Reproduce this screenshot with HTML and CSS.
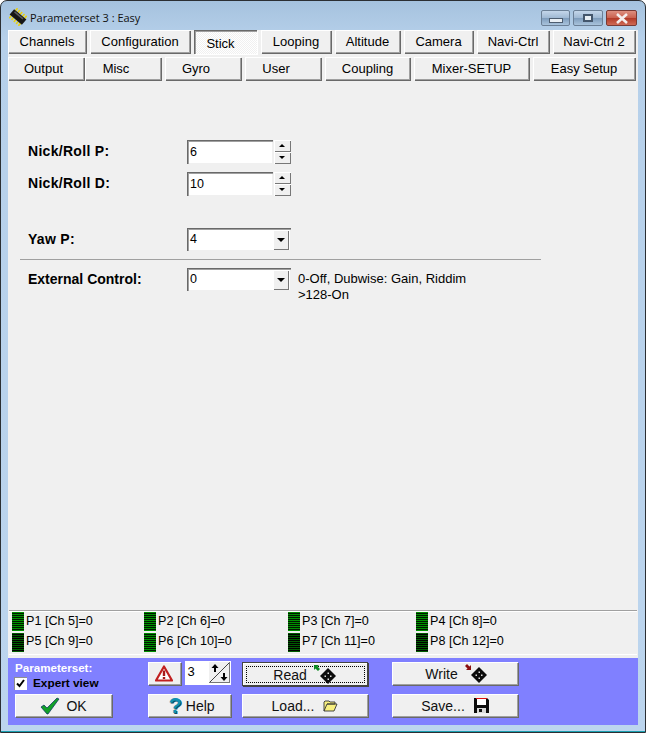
FILE: index.html
```html
<!DOCTYPE html>
<html lang="en">
<head>
  <meta charset="UTF-8">
  <title>Parameterset 3 : Easy</title>
  <link rel="stylesheet" href="styles.css">
</head>
<body>
  <div class="window">
    <div class="titlebar">
      <svg class="app-icon" width="18" height="18" viewBox="0 0 18 18">
        <g transform="rotate(40 9 9)">
          <path d="M3 2.500v13M6 2.500v13M9 2.500v13M12 2.500v13M15 2.500v13" stroke="#e8d010" stroke-width="1.600"/>
          <rect x="1" y="5.500" width="16" height="7" fill="#161616"/>
          <rect x="3" y="6.500" width="11" height="1.500" fill="#5a5a5a"/>
        </g>
      </svg>
      <span class="title">Parameterset 3 : Easy</span>
      <div class="caption-buttons">
        <div class="cap-btn cap-btn-min"><span class="cap-min"></span></div>
        <div class="cap-btn"><span class="cap-max"></span></div>
        <div class="cap-btn cap-close">
          <svg width="14" height="11" viewBox="0 0 14 11"><path d="M2 1l10 9M12 1L2 10" stroke="#f4eeee" stroke-width="2.600" fill="none"/></svg>
        </div>
      </div>
    </div>

    <div class="client">
      <div class="tabs tabs-top">
        <div class="tab">Channels</div>
        <div class="tab">Configuration</div>
        <div class="tab tab-active">Stick</div>
        <div class="tab">Looping</div>
        <div class="tab">Altitude</div>
        <div class="tab">Camera</div>
        <div class="tab">Navi-Ctrl</div>
        <div class="tab">Navi-Ctrl 2</div>
      </div>
      <div class="tabs tabs-bottom">
        <div class="tab tab-output">Output</div>
        <div class="tab tab-short">Misc</div>
        <div class="tab tab-short">Gyro</div>
        <div class="tab tab-short">User</div>
        <div class="tab">Coupling</div>
        <div class="tab">Mixer-SETUP</div>
        <div class="tab">Easy Setup</div>
      </div>

      <div class="form">
        <div class="row row-p">
          <label class="label">Nick/Roll P:</label>
          <div class="field">6</div>
          <div class="spin"><span class="spin-up"></span><span class="spin-down"></span></div>
        </div>
        <div class="row row-d">
          <label class="label">Nick/Roll D:</label>
          <div class="field">10</div>
          <div class="spin"><span class="spin-up"></span><span class="spin-down"></span></div>
        </div>
        <div class="row row-yaw">
          <label class="label">Yaw P:</label>
          <div class="combo">4<span class="combo-btn"></span></div>
        </div>
        <div class="divider"></div>
        <div class="row row-ext">
          <label class="label">External Control:</label>
          <div class="combo">0<span class="combo-btn"></span></div>
          <div class="hint">0-Off, Dubwise: Gain, Riddim<br>&gt;128-On</div>
        </div>
      </div>

      <div class="channels">
        <div class="chan"><span class="led"></span>P1 [Ch 5]=0</div>
        <div class="chan"><span class="led"></span>P2 [Ch 6]=0</div>
        <div class="chan"><span class="led"></span>P3 [Ch 7]=0</div>
        <div class="chan"><span class="led"></span>P4 [Ch 8]=0</div>
        <div class="chan"><span class="led led-dim"></span>P5 [Ch 9]=0</div>
        <div class="chan"><span class="led"></span>P6 [Ch 10]=0</div>
        <div class="chan"><span class="led led-dim"></span>P7 [Ch 11]=0</div>
        <div class="chan"><span class="led led-dim"></span>P8 [Ch 12]=0</div>
      </div>

      <div class="actions">
        <div class="paramset">
          <div class="paramset-title">Parameterset:</div>
          <div class="expert"><span class="check">
            <svg width="9" height="9" viewBox="0 0 9 9"><path d="M1 4.500l2.500 2.500 4.500-6" stroke="#000" stroke-width="2" fill="none"/></svg>
          </span>Expert view</div>
        </div>
        <div class="warn-spin">
          <div class="btn btn-warn">
            <svg width="18" height="17" viewBox="0 0 18 17">
              <path d="M9 1.500L17 15.500H1z" fill="#fff" stroke="#c02020" stroke-width="2.200" stroke-linejoin="round"/>
              <path d="M9 5.500v5.500M9 12v2" stroke="#a81818" stroke-width="2.400"/>
            </svg>
          </div>
          <div class="set-spin">
            <span class="set-value">3</span>
            <span class="set-arrows">
              <svg width="21" height="21" viewBox="0 0 21 21">
                <path d="M1 20L20 1" stroke="#444" stroke-width="1"/>
                <path d="M6 10V5" stroke="#000" stroke-width="2"/>
                <path d="M2.500 6L6 2l3.500 4z" fill="#000"/>
                <path d="M15 11v5" stroke="#000" stroke-width="2"/>
                <path d="M11.500 15L15 19l3.500-4z" fill="#000"/>
              </svg>
            </span>
          </div>
        </div>
        <div class="btn btn-default"><span class="focus"><span class="btn-text">Read</span>
          <svg class="ico-dice" width="24" height="20" viewBox="0 0 24 20">
            <path d="M0 0h5L3.500 1.500 6 4 4 6 1.500 3.500 0 5z" fill="#0a8a20"/>
            <path d="M14 3l8 8-8 8-8-8z" fill="#0c0c0c"/>
            <path d="M10.500 10.500h1.500v1.500h-1.500zM13.500 7.500h1.500v1.500h-1.500zM16 10.500h1.500v1.500H16zM13.500 13.500h1.500v1.500h-1.500z" fill="#ddd"/>
          </svg></span></div>
        <div class="btn btn-write"><span class="btn-text">Write</span>
          <svg class="ico-dice" width="24" height="20" viewBox="0 0 24 20">
            <path d="M6 6H1l1.500-1.500L0 2l2-2 2.500 2.500L6 1z" fill="#8a1010"/>
            <path d="M14 3l8 8-8 8-8-8z" fill="#0c0c0c"/>
            <path d="M10.500 10.500h1.500v1.500h-1.500zM13.500 7.500h1.500v1.500h-1.500zM16 10.500h1.500v1.500H16zM13.500 13.500h1.500v1.500h-1.500z" fill="#ddd"/>
          </svg>
        </div>

        <div class="btn">
          <svg class="ico-left" width="20" height="18" viewBox="0 0 20 18"><path d="M1 10l3-2 3 3 10-10 2 1-11 15H7z" fill="#12a028" stroke="#062c60" stroke-width=".7"/></svg>
          OK
        </div>
        <div class="btn btn-help"><span class="help-mark">?</span>Help</div>
        <div class="btn">Load...
          <svg class="ico-right" width="15" height="12" viewBox="0 0 15 12">
            <path d="M1 11V2l1-1h4l1 1h5v2H4l-3 7h10l3-7H4" fill="#f8f080" stroke="#333" stroke-width=".9"/>
          </svg>
        </div>
        <div class="btn">Save...
          <svg class="ico-right" width="15" height="15" viewBox="0 0 15 15">
            <path d="M0 0h13l2 2v13H0z" fill="#0c0c0c"/>
            <path d="M2 0h11v1H2z" fill="#e01010"/>
            <path d="M3 1h9v6H3z" fill="#fff"/>
            <path d="M3 10h9v5H3z" fill="#d8d8d8"/>
            <path d="M5 11h3v3H5z" fill="#111"/>
          </svg>
        </div>
      </div>
    </div>
  </div>
</body>
</html>
```

FILE: styles.css
```css
html, body {
  margin: 0;
  padding: 0;
}
body {
  width: 646px;
  height: 733px;
  overflow: hidden;
  background: #fff;
  font-family: "Liberation Sans", Arial, sans-serif;
  font-size: 13px;
  color: #000;
}
.window {
  box-sizing: border-box;
  width: 646px;
  height: 733px;
  display: flex;
  flex-direction: column;
  padding: 0 7px 7px 7px;
  border: 1px solid #2b2f33;
  border-radius: 7px 7px 0 0;
  background: linear-gradient(180deg, #a5c2de 0%, #b6d0ea 5%, #bcd5ee 100%);
  box-shadow: inset 0 -1px 0 #1aa0b0;
}

/* title bar */
.titlebar {
  height: 29px;
  display: flex;
  align-items: center;
  flex-shrink: 0;
}
.app-icon {
  margin: 2px 3px 0 1px;
}
.title {
  margin-top: 4px;
  font-family: "Open Sans", sans-serif;
  font-size: 11px;
  color: #111;
}
.caption-buttons {
  margin-left: auto;
  margin-right: 1px;
  display: flex;
  gap: 3px;
  align-self: flex-start;
  padding-top: 9px;
}
.cap-btn {
  box-sizing: border-box;
  width: 30px;
  height: 16px;
  border: 1px solid #6b7f96;
  border-radius: 2px;
  background: linear-gradient(180deg, #c4d6ea 0%, #9fb8d3 50%, #7e9cbc 52%, #a9c3dc 100%);
  display: flex;
  align-items: center;
  justify-content: center;
}
.cap-btn-min {
  width: 29px;
}
.cap-min {
  width: 12px;
  height: 3px;
  margin-top: 5px;
  background: #e8eef4;
  border: 1px solid #4d5d70;
}
.cap-max {
  width: 6px;
  height: 4px;
  border: 2px solid #44566c;
  background: #e8eef4;
}
.cap-close {
  width: 31px;
  border-color: #7a3a34;
  background: linear-gradient(180deg, #dd8f80 0%, #c9604e 50%, #b23a28 52%, #cf6a56 100%);
}

/* client area */
.client {
  flex: 1;
  display: flex;
  flex-direction: column;
  background: #f0f0f0;
  min-height: 0;
}

/* tabs */
.tabs {
  display: grid;
  column-gap: 4px;
  height: 24px;
}
.tabs-top {
  grid-template-columns: 78px 100px 63px 70px 65px 69px 72px 82px;
}
.tabs-bottom {
  margin-top: 3px;
  grid-template-columns: 73px 76px 76px 76px 85px 115px 102px;
}
.tab, .btn {
  display: flex;
  align-items: center;
  justify-content: center;
  box-sizing: border-box;
  background: #f0f0f0;
  box-shadow: inset 1px 1px 0 #fff, inset -1px -1px 0 #a0a0a0, 1px 1px 0 #696969;
}
.tab {
  height: 23px;
  padding-bottom: 1px;
}
.tab-output {
  margin-right: -3px;
  padding-right: 5px;
}
.tab-short {
  padding-right: 14px;
}
.tab-active {
  height: 24px;
  padding: 3px 10px 0 0;
  box-shadow: inset 1px 1px 0 #696969, inset 2px 2px 0 #a0a0a0, 1px 1px 0 #fff;
  background-image:
    linear-gradient(45deg, #fff 25%, transparent 25%, transparent 75%, #fff 75%),
    linear-gradient(45deg, #fff 25%, transparent 25%, transparent 75%, #fff 75%);
  background-size: 2px 2px;
  background-position: 0 0, 1px 1px;
}

/* form */
.form {
  flex: 1;
  min-height: 0;
  padding-top: 59px;
  padding-left: 12px;
}
.row {
  display: flex;
  align-items: flex-start;
  height: 24px;
  margin-left: 8px;
}
.row-p .label, .row-d .label {
  letter-spacing: .3px;
}
.row-d {
  margin-top: 8px;
}
.row-yaw {
  height: 23px;
  margin-top: 32px;
}
.row-yaw .label {
  letter-spacing: .3px;
}
.row-ext {
  height: 23px;
  margin-top: 8px;
}
.label {
  width: 159px;
  padding-top: 3px;
  font-weight: bold;
  font-size: 14px;
}
.field, .combo {
  box-sizing: border-box;
  height: 24px;
  background: #fff;
  box-shadow: inset 1px 1px 0 #696969, inset 2px 2px 0 #a0a0a0, inset -1px -1px 0 #f0f0f0;
  padding: 5px 0 0 3px;
  font-size: 12.500px;
}
.field {
  width: 86px;
}
.spin {
  width: 17px;
  height: 24px;
  margin-left: 1px;
  display: flex;
  flex-direction: column;
}
.spin-up, .spin-down {
  position: relative;
  flex: 1;
  background: #f0f0f0;
  box-shadow: inset 1px 1px 0 #fff, inset -1px -1px 0 #777;
}
.spin-up::after, .spin-down::after {
  content: "";
  position: absolute;
  left: 5px;
  top: 4px;
  border-left: 3px solid transparent;
  border-right: 3px solid transparent;
}
.spin-up::after {
  border-bottom: 3px solid #000;
}
.spin-down::after {
  border-top: 3px solid #000;
}
.combo {
  position: relative;
  width: 104px;
  height: 23px;
  padding-top: 4px;
}
.combo-btn {
  position: absolute;
  right: 2px;
  top: 2px;
  width: 16px;
  height: 20px;
  background: #f0f0f0;
  box-shadow: inset 1px 1px 0 #fff, inset -1px -1px 0 #777;
}
.combo-btn::after {
  content: "";
  position: absolute;
  left: 4px;
  top: 8px;
  border-left: 4px solid transparent;
  border-right: 4px solid transparent;
  border-top: 4px solid #000;
}
.divider {
  margin-top: 8px;
  width: 521px;
  height: 1px;
  background: #a0a0a0;
}
.hint {
  margin-left: 7px;
  margin-top: 3px;
  font-size: 13px;
  line-height: 16px;
}

/* channel readouts */
.channels {
  box-sizing: border-box;
  height: 45px;
  margin: 0 1px 3px 1px;
  padding: 0 0 0 3px;
  display: grid;
  grid-template-columns: 132px 144px 128px 1fr;
  grid-auto-rows: 20px;
  border-top: 1px solid #a0a0a0;
  border-bottom: 1px solid #fff;
  box-shadow: inset 0 1px 0 #fff;
  font-size: 12.600px;
  line-height: 20px;
}
.chan {
  display: flex;
  align-items: flex-start;
  gap: 2px;
}
.led {
  width: 12px;
  height: 19px;
  margin-top: 1px;
  background: linear-gradient(180deg, #009000 50%, #001800 50%);
  background-size: 100% 2px;
}
.chan:nth-child(n+5) .led {
  margin-top: 2px;
}
.led-dim {
  background-image: linear-gradient(180deg, #005c00 50%, #000 50%);
}

/* blue action panel */
.actions {
  box-sizing: border-box;
  height: 67px;
  padding: 4px 0 0 7px;
  background: #8080ff;
  display: grid;
  grid-template-columns: 133px 94px 150px 127px;
  grid-template-rows: 23px 23px;
  row-gap: 9px;
  justify-content: start;
}
.actions > :nth-child(4n+1) {
  width: 97px;
}
.actions > :nth-child(4n+2) {
  width: 83px;
}
.actions > :nth-child(4n+3), .actions > :nth-child(4n) {
  width: 126px;
}
.paramset {
  color: #fff;
}
.paramset-title {
  font-size: 11.600px;
  font-weight: bold;
  margin-top: -1px;
  line-height: 14px;
}
.expert {
  display: flex;
  align-items: center;
  margin-top: 1px;
  margin-left: -1px;
  font-size: 11.800px;
  font-weight: bold;
  color: #000;
}
.check {
  box-sizing: border-box;
  width: 13px;
  height: 13px;
  margin-right: 6px;
  background: #fff;
  box-shadow: inset 1px 1px 0 #909090;
  display: flex;
  align-items: center;
  justify-content: center;
}
.warn-spin {
  display: flex;
  gap: 4px;
}
.btn-warn {
  width: 33px;
  height: 23px;
}
.set-spin {
  width: 47px;
  height: 24px;
  margin-top: -1px;
  box-sizing: border-box;
  background: #fff;
  display: flex;
  justify-content: space-between;
  padding: 1px;
}
.set-value {
  padding: 2px 0 0 2px;
  font-size: 13px;
}
.set-arrows {
  width: 21px;
  height: 21px;
  background: #f0f0f0;
  box-shadow: inset -1px -1px 0 #777;
  display: flex;
}
.btn {
  height: 23px;
  font-size: 14px;
  color: #111;
}
.actions > .btn-default {
  width: 124px;
  height: 22px;
  margin: 1px 0 0 1px;
  box-shadow: inset 1px 1px 0 #fff, 0 0 0 1px #444, 1px 1px 0 1px #444;
  padding: 3px 2px 2px 3px;
}
.focus {
  flex: 1;
  height: 100%;
  box-sizing: border-box;
  border: 1px dotted #000;
  display: flex;
  align-items: center;
  justify-content: center;
}
.btn-text {
  padding-right: 2px;
}
.btn-default .btn-text {
  padding-left: 0;
}
.btn-write {
  padding: 1px 0 0 4px;
}
.ico-dice {
  margin-left: 5px;
}
.ico-left {
  margin-right: 6px;
}
.ico-right {
  margin-left: 9px;
}
.btn-help {
  padding-left: 4px;
}
.help-mark {
  font-size: 22px;
  font-weight: bold;
  color: #1090b0;
  text-shadow: 1px 1px 0 #0a5068;
  margin-right: 4px;
  line-height: 22px;
}
```
